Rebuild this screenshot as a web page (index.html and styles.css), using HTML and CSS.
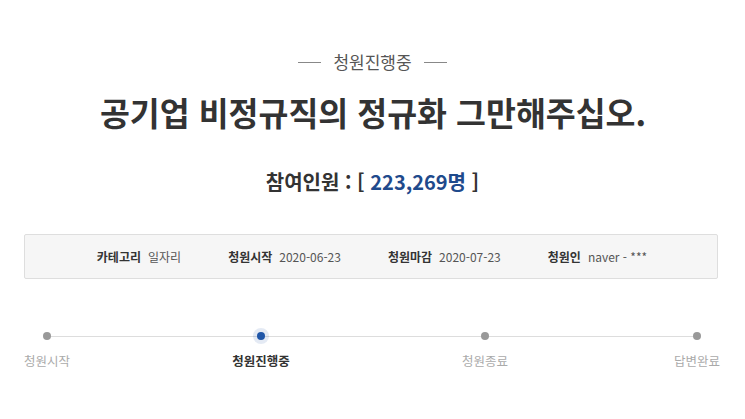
FILE: index.html
```html
<!DOCTYPE html>
<html lang="ko">
<head>
<meta charset="utf-8">
<link rel="stylesheet" href="styles.css">
</head>
<body>
<div class="page">
  <div class="status"><span class="dash"></span><span class="status-text">청원진행중</span><span class="dash"></span></div>
  <h1 class="title">공기업 비정규직의 정규화 그만해주십오.</h1>
  <div class="count">참여인원 : [ <span class="num">223,269명</span> ]</div>
  <div class="info">
    <div class="item"><span class="label">카테고리</span><span class="value">일자리</span></div>
    <div class="item"><span class="label">청원시작</span><span class="value">2020-06-23</span></div>
    <div class="item"><span class="label">청원마감</span><span class="value">2020-07-23</span></div>
    <div class="item"><span class="label">청원인</span><span class="value">naver - ***</span></div>
  </div>
  <div class="progress">
    <div class="step"><span class="dot"></span><span class="step-label">청원시작</span></div>
    <div class="step current"><span class="dot"></span><span class="step-label">청원진행중</span></div>
    <div class="step"><span class="dot"></span><span class="step-label">청원종료</span></div>
    <div class="step"><span class="dot"></span><span class="step-label">답변완료</span></div>
  </div>
</div>
</body>
</html>
```

FILE: styles.css
```css
html, body {
  margin: 0;
  padding: 0;
  background: #ffffff;
}
body {
  font-family: "Noto Sans CJK KR", "Noto Sans", sans-serif;
  color: #333333;
}
.page {
  width: 745px;
  height: 419px;
  overflow: hidden;
  padding-top: 50px;
  box-sizing: border-box;
}
.status {
  display: flex;
  justify-content: center;
  align-items: center;
  gap: 12px;
  height: 24px;
}
.status-text {
  font-size: 17px;
  color: #555555;
  line-height: 24px;
}
.dash {
  width: 23px;
  height: 1px;
  background: #888888;
}
.title {
  margin: 18px 0 0 0;
  text-align: center;
  font-size: 32.5px;
  font-weight: 700;
  line-height: 40px;
  color: #333333;
  padding-left: 1px;
}
.count {
  margin-top: 36px;
  text-align: center;
  font-size: 20px;
  font-weight: 700;
  line-height: 28px;
  color: #333333;
}
.count .num {
  color: #1f4a8c;
}
.info {
  margin: 38px 27px 0 24px;
  height: 45px;
  box-sizing: border-box;
  background: #f6f6f6;
  border: 1px solid #dedede;
  border-radius: 2px;
  display: flex;
  justify-content: center;
  align-items: center;
  gap: 47px;
  font-size: 12px;
  padding-left: 2px;
}
.item {
  display: flex;
  align-items: center;
  gap: 7px;
}
.label {
  font-weight: 700;
  color: #333333;
}
.value {
  color: #555555;
}
.progress {
  position: relative;
  display: grid;
  grid-template-columns: 214px 224px 212px 94px;
  margin-top: 53px;
  width: 745px;
}
.progress::before {
  content: "";
  position: absolute;
  left: 47px;
  right: 48px;
  top: 4px;
  height: 1px;
  background: #dddddd;
}
.step {
  position: relative;
  width: 94px;
  display: flex;
  flex-direction: column;
  align-items: center;
  gap: 12px;
}
.dot {
  width: 8px;
  height: 8px;
  border-radius: 50%;
  background: #999999;
}
.step-label {
  font-size: 12.5px;
  line-height: 18px;
  color: #aaaaaa;
}
.current .dot {
  background: #1f56a8;
  box-shadow: 0 0 0 4px rgba(31, 86, 168, 0.12);
}
.current .step-label {
  color: #333333;
  font-weight: 700;
}
```
